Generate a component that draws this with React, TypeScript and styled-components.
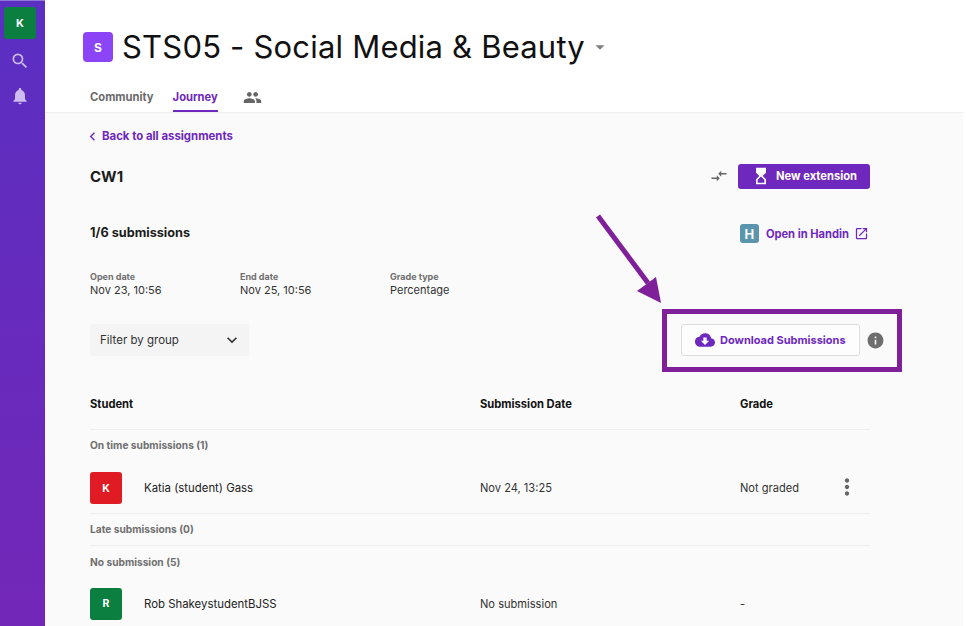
import { createGlobalStyle, styled } from "styled-components"
import {
  MdSearch,
  MdNotifications,
  MdPeople,
  MdArrowDropDown,
  MdChevronLeft,
  MdCompareArrows,
  MdHourglassTop,
  MdOpenInNew,
  MdCloudDownload,
  MdInfo,
  MdKeyboardArrowDown,
  MdMoreVert,
} from "react-icons/md"

const GlobalStyle = createGlobalStyle`
html, body {
  margin: 0;
  height: 100%;
  overflow: hidden;
  background: #fff;
}
* { box-sizing: border-box; }
`

const PURPLE = "#6e28bd"
const FONT = `"Inter", "Open Sans", sans-serif`

interface IRow {
  initial: string
  color: string
  name: string
  date: string
  grade: string
  menu?: boolean
}

function StudentRow({ initial, color, name, date, grade, menu }: IRow) {
  return (
    <Row>
      <NameCell>
        <Avatar $color={color}>{initial}</Avatar>
        <Name>{name}</Name>
      </NameCell>
      <Cell>{date}</Cell>
      <Cell>{grade}</Cell>
      {menu && (
        <Kebab>
          <MdMoreVert size={26} />
        </Kebab>
      )}
    </Row>
  )
}

export default function App() {
  return (
    <>
      <GlobalStyle />
      <Page>
        <Sidebar>
          <UserBadge>K</UserBadge>
          <SideIcon>
            <MdSearch size={20} />
          </SideIcon>
          <SideIcon>
            <MdNotifications size={20} />
          </SideIcon>
        </Sidebar>
        <Main>
          <Header>
            <TitleRow>
              <CourseBadge>S</CourseBadge>
              <Title>STS05 - Social Media &amp; Beauty</Title>
              <Caret>
                <MdArrowDropDown size={22} />
              </Caret>
            </TitleRow>
            <Tabs>
              <Tab>Community</Tab>
              <Tab $active>Journey</Tab>
              <TabIcon>
                <MdPeople size={19} />
              </TabIcon>
            </Tabs>
          </Header>
          <Content>
            <BackLink>
              <MdChevronLeft size={17} />
              Back to all assignments
            </BackLink>
            <TopRow>
              <AssignmentName>CW1</AssignmentName>
              <Actions>
                <SwapIcon>
                  <MdCompareArrows size={18} />
                </SwapIcon>
                <PrimaryButton>
                  <MdHourglassTop size={20} />
                  New extension
                </PrimaryButton>
              </Actions>
            </TopRow>
            <SubmissionRow>
              <SubmissionCount>1/6 submissions</SubmissionCount>
              <HandinLink>
                <HandinLogo>H</HandinLogo>
                Open in Handin
                <MdOpenInNew size={15} />
              </HandinLink>
            </SubmissionRow>
            <Meta>
              <MetaItem>
                <MetaLabel>Open date</MetaLabel>
                <MetaValue>Nov 23, 10:56</MetaValue>
              </MetaItem>
              <MetaItem>
                <MetaLabel>End date</MetaLabel>
                <MetaValue>Nov 25, 10:56</MetaValue>
              </MetaItem>
              <MetaItem>
                <MetaLabel>Grade type</MetaLabel>
                <MetaValue>Percentage</MetaValue>
              </MetaItem>
            </Meta>
            <FilterRow>
              <FilterSelect>
                Filter by group
                <MdKeyboardArrowDown size={20} />
              </FilterSelect>
              <DownloadWrap>
                <DownloadButton>
                  <MdCloudDownload size={20} />
                  Download Submissions
                </DownloadButton>
                <InfoIcon>
                  <MdInfo size={19} />
                </InfoIcon>
              </DownloadWrap>
            </FilterRow>
            <TableHead>
              <HeadCell>Student</HeadCell>
              <HeadCell>Submission Date</HeadCell>
              <HeadCell>Grade</HeadCell>
            </TableHead>
            <GroupLabel>On time submissions (1)</GroupLabel>
            <StudentRow initial="K" color="#e01b24" name="Katia (student) Gass" date="Nov 24, 13:25" grade="Not graded" menu />
            <GroupLabel $compact>Late submissions (0)</GroupLabel>
            <GroupLabel $noBorder>No submission (5)</GroupLabel>
            <StudentRow initial="R" color="#0a7f3f" name="Rob ShakeystudentBJSS" date="No submission" grade="-" />
          </Content>
        </Main>
        <Highlight />
        <Arrow viewBox="0 0 80 100" aria-hidden="true">
          <line x1="4" y1="4" x2="54" y2="71" stroke="#7f1f9a" strokeWidth="5" />
          <polygon points="67,91 43,79 62,65" fill="#7f1f9a" />
        </Arrow>
      </Page>
    </>
  )
}

const Page = styled.div`
position: relative;
width: 966px;
height: 626px;
overflow: hidden;
display: flex;
font-family: ${FONT};
color: #1c1c1c;
background: #fff;
`
const Sidebar = styled.div`
width: 45px;
flex-shrink: 0;
display: flex;
flex-direction: column;
align-items: center;
padding: 6px 5px 0 0;
border-top: 1px solid #8f78d6;
background: linear-gradient(180deg, #5a2fc2 0%, #7327b8 100%);
`
const UserBadge = styled.div`
width: 32px;
height: 32px;
border-radius: 3px;
background: #0a7f3f;
color: #fff;
font-size: 11px;
font-weight: 700;
display: flex;
justify-content: center;
align-items: center;
`
const SideIcon = styled.div`
height: 20px;
margin-left: -1px;
color: #cdbcf0;
display: flex;
&:nth-child(2) { margin-top: 12px; }
&:nth-child(3) { margin-top: 15px; }
`
const Main = styled.div`
flex: 1;
min-width: 0;
margin-right: 3px;
display: flex;
flex-direction: column;
background: #fafafa;
`
const Header = styled.div`
height: 113px;
padding: 32px 0 0 38px;
background: #fff;
border-bottom: 1px solid #efefef;
`
const TitleRow = styled.div`
display: flex;
align-items: center;
height: 30px;
`
const CourseBadge = styled.div`
width: 30px;
height: 30px;
border-radius: 4px;
background: #8c44f7;
color: #fff;
font-size: 12px;
font-weight: 700;
display: flex;
justify-content: center;
align-items: center;
`
const Title = styled.h1`
margin: 0 0 0 9px;
font-size: 31px;
letter-spacing: 0.2px;
font-weight: 400;
line-height: 30px;
color: #111;
white-space: nowrap;
`
const Caret = styled.span`
display: flex;
margin-left: 4px;
color: #808080;
`
const Tabs = styled.div`
display: flex;
align-items: flex-end;
height: 50px;
margin: 0 0 0 7px;
`
const Tab = styled.div<{ $active?: boolean }>`
height: 29px;
margin-right: 19px;
font-size: 11.2px;
font-weight: 700;
line-height: 28px;
color: ${(p) => (p.$active ? PURPLE : "#6b6b6b")};
border-bottom: 2px solid ${(p) => (p.$active ? PURPLE : "transparent")};
`
const TabIcon = styled.div`
display: flex;
height: 29px;
margin-left: 6px;
padding-top: 5px;
color: #666;
`
const Content = styled.div`
flex: 1;
padding: 14px 0 0 45px;
width: 825px;
`
const BackLink = styled.div`
display: flex;
align-items: center;
height: 18px;
margin-left: -6px;
font-size: 11.4px;
font-weight: 700;
color: ${PURPLE};
svg { margin-right: 1px; }
`
const TopRow = styled.div`
display: flex;
justify-content: space-between;
align-items: center;
height: 26px;
margin-top: 18px;
`
const AssignmentName = styled.div`
font-size: 15px;
font-weight: 700;
`
const Actions = styled.div`
display: flex;
align-items: center;
`
const SwapIcon = styled.div`
display: flex;
margin-right: 10px;
color: #666;
`
const PrimaryButton = styled.div`
width: 132px;
height: 25px;
border-radius: 3px;
background: ${PURPLE};
color: #fff;
font-size: 11.2px;
font-weight: 700;
display: flex;
align-items: center;
padding-left: 13px;
gap: 5px;
`
const SubmissionRow = styled.div`
display: flex;
justify-content: space-between;
align-items: center;
height: 20px;
margin-top: 33px;
`
const SubmissionCount = styled.div`
font-size: 12.7px;
font-weight: 700;
`
const HandinLink = styled.div`
display: flex;
align-items: center;
margin: 3px 1px 0 0;
font-size: 11.15px;
font-weight: 700;
color: ${PURPLE};
svg { margin-left: 5px; }
`
const HandinLogo = styled.div`
width: 19px;
height: 19px;
margin-right: 7px;
border-radius: 3px;
background: #5b94ad;
color: #fff;
font-size: 13px;
font-weight: 700;
display: flex;
justify-content: center;
align-items: center;
`
const Meta = styled.div`
display: flex;
margin-top: 29px;
`
const MetaItem = styled.div`
width: 150px;
`
const MetaLabel = styled.div`
font-size: 9px;
font-weight: 700;
line-height: 12px;
color: #6f6f6f;
`
const MetaValue = styled.div`
font-size: 11px;
line-height: 14px;
color: #333;
`
const FilterRow = styled.div`
display: flex;
justify-content: space-between;
align-items: center;
height: 32px;
margin-top: 27px;
`
const FilterSelect = styled.div`
width: 159px;
height: 32px;
padding: 0 7px 0 10px;
border-radius: 3px;
background: #f4f4f4;
font-size: 11.5px;
color: #333;
display: flex;
justify-content: space-between;
align-items: center;
`
const DownloadWrap = styled.div`
display: flex;
align-items: center;
margin-right: -15px;
gap: 6px;
`
const DownloadButton = styled.div`
width: 179px;
height: 32px;
border: 1px solid #dcdcdc;
border-radius: 3px;
background: #fdfdfd;
color: ${PURPLE};
font-size: 11px;
font-weight: 700;
display: flex;
align-items: center;
padding-left: 13px;
gap: 5px;
white-space: nowrap;
`
const InfoIcon = styled.div`
display: flex;
color: #6e6e6e;
`
const TableHead = styled.div`
display: grid;
grid-template-columns: 390px 260px 130px;
width: 780px;
height: 42px;
margin-top: 32px;
padding-top: 9px;
border-bottom: 1px solid #eeeeee;
`
const HeadCell = styled.div`
font-size: 11.2px;
font-weight: 700;
line-height: 14px;
color: #111;
`
const GroupLabel = styled.div<{ $compact?: boolean; $noBorder?: boolean }>`
width: 780px;
height: ${(p) => (p.$compact ? "32px" : p.$noBorder ? "28px" : "29px")};
padding-top: ${(p) => (p.$noBorder ? "10px" : "9px")};
font-size: 10.2px;
font-weight: 700;
line-height: 12px;
color: #707070;
border-bottom: ${(p) => (p.$compact ? "1px solid #eeeeee" : "none")};
`
const Row = styled.div`
position: relative;
display: grid;
grid-template-columns: 390px 260px 130px;
align-items: center;
width: 780px;
height: 55px;
padding-top: 4px;
border-bottom: 1px solid #eeeeee;
&:last-child { border-bottom: none; }
`
const NameCell = styled.div`
display: flex;
align-items: center;
`
const Avatar = styled.div<{ $color: string }>`
width: 32px;
height: 32px;
border-radius: 3px;
background: ${(p) => p.$color};
color: #fff;
font-size: 10.5px;
font-weight: 700;
display: flex;
justify-content: center;
align-items: center;
`
const Name = styled.div`
margin-left: 22px;
font-size: 11.4px;
color: #222;
`
const Cell = styled.div`
font-size: 11.1px;
color: #333;
`
const Kebab = styled.div`
position: absolute;
right: 10px;
top: 15px;
display: flex;
color: #666;
`
const Highlight = styled.div`
position: absolute;
left: 662px;
top: 309px;
width: 240px;
height: 63px;
border: 5px solid #7f1f9a;
pointer-events: none;
`
const Arrow = styled.svg`
position: absolute;
left: 594px;
top: 212px;
width: 80px;
height: 100px;
pointer-events: none;
`
